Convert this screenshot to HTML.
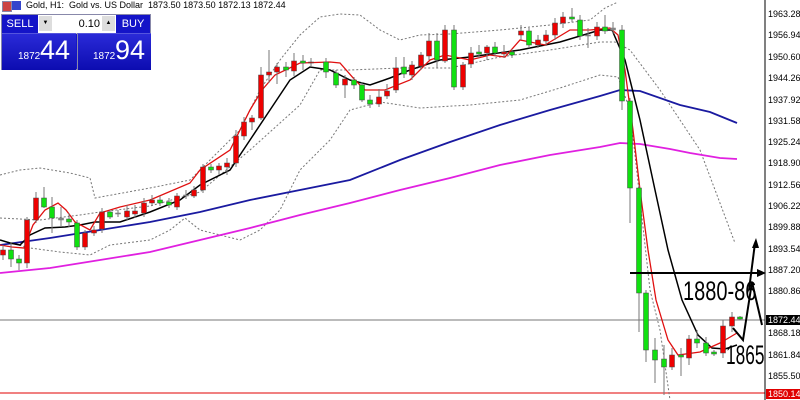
<!DOCTYPE html>
<html><head><meta charset="utf-8"><style>
html,body{margin:0;padding:0;background:#fff;width:800px;height:400px;overflow:hidden;font-family:"Liberation Sans",sans-serif}
svg{position:absolute;left:0;top:0}
</style></head><body>
<svg id="s" width="800" height="400" xmlns="http://www.w3.org/2000/svg">
<line x1="0" y1="320" x2="765" y2="320" stroke="#777" stroke-width="1"/>
<line x1="0" y1="393" x2="765" y2="393" stroke="#f08080" stroke-width="2"/>
<g fill="none" stroke="#777" stroke-width="1" stroke-dasharray="2,2">
<polyline points="0,175 20,170 40,168 70,173 90,178 95,198 150,188 190,180 200,170 240,130 260,90 280,60 300,35 320,17 340,14 360,15 380,30 400,40 420,35 450,34 500,30 550,25 590,20 605,8 618,2"/>
<polyline points="0,218 40,220 80,215 100,212 150,206 200,192 250,150 300,105 320,70 350,70 400,68 450,68 500,57 550,50 600,42 615,42 630,50 660,90 700,150 735,243"/>
<polyline points="0,240 30,248 60,252 90,255 110,245 150,240 170,230 185,218 200,230 240,240 260,230 280,210 300,170 330,140 350,110 380,102 420,108 470,105 520,100 560,88 600,75 618,77 630,110 640,200 650,290 660,330 670,400"/>
</g>
<polyline fill="none" stroke="#1a1aa0" stroke-width="1.8" points="0,245 50,238 100,230 150,222 200,212 250,200 300,190 350,180 400,160 450,142 500,125 550,110 600,96 620,90 640,91 680,105 710,112 737,123"/>
<polyline fill="none" stroke="#e020e0" stroke-width="1.8" points="0,273 50,268 100,260 150,252 200,240 250,228 300,215 350,203 400,190 450,178 500,165 550,155 600,147 620,143 640,144 670,149 690,153 720,158 737,159"/>
<polyline fill="none" stroke="#000" stroke-width="1.5" points="0,240 10,243 20,245 30,235 45,228 65,227 80,225 95,222 120,222 150,212 180,200 200,185 230,170 250,140 270,110 290,80 310,67 330,70 350,80 370,85 390,78 410,70 440,60 470,57 520,50 560,42 600,30 612,30 625,60 640,120 655,190 668,250 682,300 698,335 712,348 725,349 737,345"/>
<polyline fill="none" stroke="#e01010" stroke-width="1.3" points="0,245 12,247 24,248 33,225 45,210 58,203 66,210 75,222 90,230 100,213 120,207 150,200 190,183 200,170 230,150 250,110 262,90 275,75 300,63 330,62 340,63 355,80 365,90 385,90 410,80 430,60 445,55 470,60 490,55 505,57 520,40 545,45 570,30 590,30 610,28 618,35 625,70 633,130 640,190 648,250 656,300 668,340 678,355 700,352 720,343 737,333"/>
<g id="c"></g>
<line x1="765" y1="0" x2="765" y2="400" stroke="#000"/>
<line x1="630" y1="273" x2="760" y2="273" stroke="#000" stroke-width="2"/>
<polygon points="766,273 757,269 757,277" fill="#000"/>
<polyline fill="none" stroke="#000" stroke-width="2" points="733,328 743,340 752,282 762,325"/>
<line x1="749" y1="290" x2="755" y2="243" stroke="#000" stroke-width="2"/>
<polygon points="756,238 752,248 759,248" fill="#000"/>
<text transform="translate(683,300) scale(0.74,1)" font-size="27" font-family="Liberation Sans,sans-serif" fill="#000">1880-86</text>
<text transform="translate(726,364) scale(0.64,1)" font-size="27" font-family="Liberation Sans,sans-serif" fill="#000">1865</text>
</svg>
<div style="position:absolute;left:2px;top:1px;width:8px;height:9px;background:#c44;border:1px solid #88a"></div>
<div style="position:absolute;left:12px;top:1px;width:9px;height:9px;background:#34c"></div>
<div style="position:absolute;left:26px;top:0px;font-size:9px;white-space:nowrap">Gold, H1:&nbsp; Gold vs. US Dollar&nbsp; 1873.50 1873.50 1872.13 1872.44</div>
<div style="position:absolute;left:1px;top:14px;width:148px;height:54px;background:#1414c8;border:1px solid #88a;">
 <div style="position:absolute;left:0;top:0;width:36px;height:18px;color:#fff;font-size:11px;text-align:center;line-height:18px">SELL</div>
 <div style="position:absolute;left:36px;top:0;width:78px;height:18px;background:#fff;border-bottom:1px solid #bbb"></div>
 <div style="position:absolute;left:37px;top:1px;width:13px;height:15px;background:#ddd;font-size:6px;text-align:center;line-height:15px">▼</div>
 <div style="position:absolute;left:50px;top:0;width:48px;height:18px;font-size:11px;text-align:right;line-height:18px">0.10</div>
 <div style="position:absolute;left:100px;top:1px;width:13px;height:15px;background:#ddd;font-size:6px;text-align:center;line-height:15px">▲</div>
 <div style="position:absolute;left:114px;top:0;width:34px;height:18px;color:#fff;font-size:11px;text-align:center;line-height:18px">BUY</div>
 <div style="position:absolute;left:0;top:18px;width:74px;height:36px;border-top:1px solid #5555dd;background:linear-gradient(#2a2ad8,#0c0cb0)"><span style="position:absolute;left:16px;top:17px;color:#fff;font-size:10px">1872</span><span style="position:absolute;left:38px;top:1px;color:#fff;font-size:27px">44</span></div>
 <div style="position:absolute;left:75px;top:18px;width:73px;height:36px;border-top:1px solid #5555dd;border-left:1px solid #88a;background:linear-gradient(#2a2ad8,#0c0cb0)"><span style="position:absolute;left:15px;top:17px;color:#fff;font-size:10px">1872</span><span style="position:absolute;left:37px;top:1px;color:#fff;font-size:27px">94</span></div>
</div>
<script>
var C=[[0,'r',250,255,245,260],[8,'g',250,259,243,267],[16,'g',259,263,255,270],[24,'r',220,263,217,268],[33,'r',198,220,192,223],[41,'g',198,207,187,208],[49,'g',207,218,197,233],[58,'d',218,220,207,227],[66,'g',219,222,213,227],[74,'g',223,247,220,250],[82,'r',233,247,230,250],[91,'r',230,233,226,236],[99,'r',212,229,208,233],[107,'g',212,217,210,219],[115,'d',213,214,210,217],[124,'r',211,217,205,220],[132,'r',211,214,205,218],[141,'r',203,213,198,217],[149,'r',200,203,195,206],[157,'g',200,203,196,206],[166,'g',202,205,198,208],[174,'r',196,207,193,210],[183,'d',195,196,190,199],[191,'r',190,196,186,198],[200,'r',167,190,164,193],[208,'g',167,170,164,173],[216,'r',166,170,163,175],[224,'r',163,167,158,175],[233,'r',136,163,130,167],[241,'r',122,136,117,140],[249,'r',118,122,115,130],[258,'r',75,118,67,120],[266,'r',72,75,50,83],[274,'r',67,72,63,84],[283,'g',67,70,62,77],[291,'r',61,71,53,76],[300,'g',61,63,55,70],[308,'r',62,63,58,67],[323,'g',62,72,58,78],[333,'g',73,85,70,88],[342,'r',79,85,75,98],[351,'g',80,85,77,89],[359,'g',85,100,82,102],[367,'g',100,104,95,108],[376,'r',97,104,89,107],[384,'r',91,96,84,99],[393,'r',68,90,57,93],[401,'g',67,74,57,78],[409,'r',65,75,61,80],[418,'r',55,66,52,70],[426,'r',41,56,33,60],[434,'g',41,60,33,68],[442,'r',30,61,25,63],[451,'g',30,87,25,90],[460,'r',65,87,62,90],[468,'r',53,64,47,68],[476,'g',52,54,45,58],[484,'r',47,53,45,60],[492,'g',47,53,42,56],[501,'r',52,54,45,58],[509,'g',52,55,49,58],[518,'r',31,35,25,40],[526,'g',31,45,28,48],[535,'r',40,45,35,48],[543,'r',35,41,30,45],[552,'r',23,35,18,40],[560,'r',17,23,12,28],[569,'g',17,19,8,22],[577,'g',20,36,15,40],[585,'d',35,36,28,48],[594,'r',27,36,22,40],[602,'g',27,31,15,34],[610,'d',28,30,22,34],[619,'g',30,101,25,110],[627,'g',101,188,98,223],[636,'g',188,293,185,332],[643,'g',293,350,290,362],[652,'g',350,360,338,383],[661,'g',359,367,345,395],[669,'r',355,367,348,370],[678,'g',355,357,348,376],[686,'r',339,358,335,365],[694,'g',339,343,330,348],[703,'g',343,353,337,356],[711,'g',352,354,350,356],[720,'r',326,353,320,358],[729,'r',317,326,312,332],[737,'g',317,319,316,320]];
var h='';C.forEach(function(c){var x=c[0]+3,f=c[1]=='r'?'#e00':(c[1]=='g'?'#10e010':'#888');
h+='<line x1="'+x+'" y1="'+c[4]+'" x2="'+x+'" y2="'+c[5]+'" stroke="#777"/>';
var hh=Math.max(c[3]-c[2],1);h+='<rect x="'+(x-2.5)+'" y="'+c[2]+'" width="5" height="'+hh+'" fill="'+f+'" stroke="'+(c[1]=='d'?'#777':'#444')+'" stroke-width="0.5"/>';});
document.getElementById('c').innerHTML=h;
</script>
<svg width="800" height="400" style="pointer-events:none">
<g font-size="9" font-family="Liberation Sans,sans-serif" fill="#000">
<text x="768" y="17">1963.28</text><text x="768" y="38">1956.94</text><text x="768" y="60">1950.60</text><text x="768" y="81">1944.26</text><text x="768" y="103">1937.92</text><text x="768" y="124">1931.58</text><text x="768" y="145">1925.24</text><text x="768" y="166">1918.90</text><text x="768" y="188">1912.56</text><text x="768" y="209">1906.22</text><text x="768" y="230">1899.88</text><text x="768" y="252">1893.54</text><text x="768" y="273">1887.20</text><text x="768" y="294">1880.86</text><text x="768" y="336">1868.18</text><text x="768" y="358">1861.84</text><text x="768" y="379">1855.50</text>
</g>
<rect x="766" y="315" width="34" height="10" fill="#000"/>
<text x="768" y="323" font-size="9" font-family="Liberation Sans,sans-serif" fill="#fff">1872.44</text>
<rect x="766" y="389" width="34" height="10" fill="#e00000"/>
<text x="768" y="397" font-size="9" font-family="Liberation Sans,sans-serif" fill="#fff">1850.14</text>
</svg>
</body></html>
